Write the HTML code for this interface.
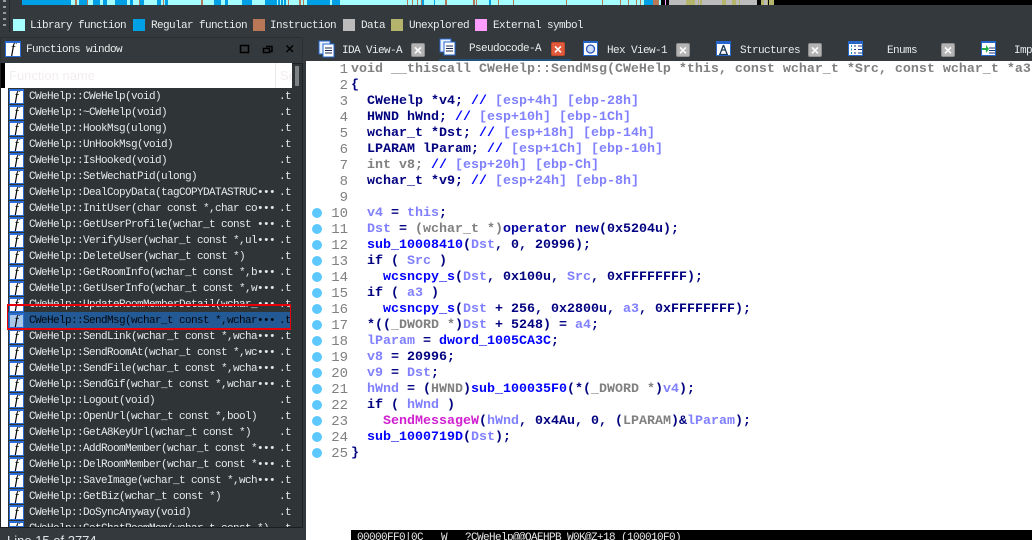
<!DOCTYPE html>
<html style="overflow:hidden;width:1032px;height:540px"><head><meta charset="utf-8"><style>
html,body{margin:0;padding:0}
body{width:1032px;height:540px;overflow:hidden;background:#33393c;font-family:"Liberation Mono",monospace}
#w{position:relative;width:1032px;height:540px;overflow:hidden;background:#33393c}
div,svg{box-sizing:border-box}
.abs{position:absolute}
.lg{position:absolute;top:19px;width:12px;height:12px}
.lt{position:absolute;top:18px;height:16px;line-height:16px;font-size:11px;letter-spacing:-.6px;color:#e8ecec;white-space:pre}
.tab{position:absolute;top:43px;height:16px;line-height:16px;font-size:11px;letter-spacing:-.6px;color:#e8ecec;white-space:pre}
.x{position:absolute;top:43px;width:14px;height:14px;background:#b4b4b4;border:1px solid #8e8e8e;border-radius:2px;color:#fff;font:bold 14px/12px "Liberation Sans",sans-serif;text-align:center}
.r{position:absolute;left:29px;width:246px;height:17px;padding-top:1px;line-height:16px;font-size:11px;letter-spacing:-.6px;color:#e6e9e9;white-space:pre;overflow:hidden}
.s{position:absolute;left:279px;width:13px;height:17px;padding-top:1px;line-height:16px;font-size:11px;letter-spacing:-.6px;color:#e6e9e9;white-space:pre}
.f{position:absolute;left:9px;width:15px;height:15px;background:#fff;border:1px solid #2a6cd6;border-top:2px solid #2a6cd6;color:#000;font:italic 15px/12px "Liberation Serif",serif;text-align:center;overflow:hidden}
.n{position:absolute;left:306px;width:42px;height:18px;line-height:18px;text-align:right;font-size:14px;color:#808080}
.c{position:absolute;left:351px;height:18px;line-height:18px;font-size:13.33px;font-weight:bold;color:#000080;white-space:pre}
.d{position:absolute;left:312px;width:10px;height:10px;border-radius:5px;background:#5cc8ff}
.g{color:#808080}.p{color:#8080ff}.b{color:#0000ff}.m{color:#d01fd0}
</style></head><body><div id="w">
<svg class="abs" style="left:0;top:0" width="1032" height="6">
<rect x="22" y="0" width="622" height="5" fill="#a6ffff"/>
<g fill="#00a0e6"><rect x="22" y="0" width="49" height="5"/><rect x="79" y="0" width="8" height="5"/><rect x="93" y="0" width="7" height="5"/><rect x="103" y="0" width="4" height="5"/><rect x="115" y="0" width="12" height="5"/><rect x="130" y="0" width="3" height="5"/><rect x="140" y="0" width="4" height="5"/><rect x="157" y="0" width="4" height="5"/><rect x="165" y="0" width="3" height="5"/><rect x="214" y="0" width="7" height="5"/><rect x="225" y="0" width="3" height="5"/><rect x="242" y="0" width="10" height="5"/><rect x="265" y="0" width="12" height="5"/><rect x="278" y="0" width="2" height="5"/><rect x="281" y="0" width="2" height="5"/><rect x="284" y="0" width="2" height="5"/><rect x="307" y="0" width="23" height="5"/><rect x="332" y="0" width="8" height="5"/><rect x="422" y="0" width="2" height="5"/><rect x="434" y="0" width="1" height="5"/><rect x="489" y="0" width="2" height="5"/><rect x="644" y="0" width="9" height="5"/></g>
<g fill="#b87858"><rect x="75" y="0" width="2" height="5"/><rect x="87" y="0" width="1" height="5"/><rect x="139" y="0" width="1" height="5"/><rect x="163" y="0" width="1" height="5"/><rect x="201" y="0" width="2" height="5"/><rect x="288" y="0" width="1" height="5"/><rect x="299" y="0" width="2" height="5"/><rect x="303" y="0" width="1" height="5"/><rect x="407" y="0" width="1" height="5"/><rect x="412" y="0" width="1" height="5"/><rect x="417" y="0" width="1" height="5"/><rect x="421" y="0" width="1" height="5"/><rect x="445" y="0" width="2" height="5"/><rect x="473" y="0" width="2" height="5"/><rect x="476" y="0" width="1" height="5"/><rect x="498" y="0" width="1" height="5"/><rect x="513" y="0" width="1" height="5"/><rect x="566" y="0" width="1" height="5"/><rect x="602" y="0" width="1" height="5"/><rect x="620" y="0" width="1" height="5"/><rect x="628" y="0" width="1" height="5"/><rect x="636" y="0" width="1" height="5"/><rect x="640" y="0" width="1" height="5"/><rect x="653" y="0" width="6" height="5"/></g>
<rect x="659" y="0" width="2" height="5" fill="#a6ffff"/>
<rect x="661" y="0" width="371" height="5" fill="#000"/>
<rect x="665" y="0" width="1" height="5" fill="#ff9cff"/>
<rect x="669" y="0" width="88" height="5" fill="#bcbcbc"/>
<g fill="#b4b46c"><rect x="686" y="0" width="9" height="5"/><rect x="698" y="0" width="1" height="5"/><rect x="700" y="0" width="2" height="5"/><rect x="722" y="0" width="4" height="5"/><rect x="732" y="0" width="4" height="5"/><rect x="739" y="0" width="1" height="5"/><rect x="761" y="0" width="3" height="5"/><rect x="767" y="0" width="1" height="5"/><rect x="769" y="0" width="5" height="5"/></g>
<rect x="764" y="0" width="3" height="5" fill="#bcbcbc"/>
</svg>
<div class="abs" style="left:3px;top:0;width:3px;height:28px;background:repeating-linear-gradient(#9a9a9a 0 2px,transparent 2px 6px)"></div>
<div class="abs" style="left:9px;top:0;width:1px;height:32px;background:#23282a"></div>

<div class="lg" style="left:13px;background:#a6ffff"></div><div class="lt" style="left:30px">Library function</div>
<div class="lg" style="left:133px;background:#00a0e6"></div><div class="lt" style="left:151px">Regular function</div>
<div class="lg" style="left:253px;background:#b87858"></div><div class="lt" style="left:270px">Instruction</div>
<div class="lg" style="left:343px;background:#bcbcbc"></div><div class="lt" style="left:361px">Data</div>
<div class="lg" style="left:391px;background:#b4b46c"></div><div class="lt" style="left:409px">Unexplored</div>
<div class="lg" style="left:475px;background:#ff9cff"></div><div class="lt" style="left:493px">External symbol</div>

<div class="abs" style="left:0;top:37px;width:303px;height:24px;border:1px solid #2a2f31;border-bottom:0"></div>
<div class="f" style="left:5px;top:41px;width:16px;height:16px">f</div>
<div class="tab" style="left:26px;top:42px">Functions window</div>
<svg class="abs" style="left:238px;top:42px" width="60" height="14" fill="none" stroke="#000">
<rect x="2.500" y="3.500" width="8" height="7" stroke-width="1.500"/>
<path d="M28 4.500h6v5h-2M25.500 6.500h6v4h-6z" stroke-width="1.500"/>
<path d="M48.500 3.500l6.500 6.500M55 3.500l-6.500 6.500" stroke-width="1.500"/>
</svg>

<div class="abs" style="left:0;top:63px;width:303px;height:465px;background:#2f3437;border:1px solid #1f2224"></div>
<div class="abs" style="left:1px;top:63px;width:4px;height:25px;background:#000"></div>
<div class="abs" style="left:5px;top:63px;width:287px;height:25px;background:#fff"></div>
<div class="abs" style="left:9px;top:69px;font:13px/14px 'Liberation Sans',sans-serif;color:#f2eeee">Function name</div>
<div class="abs" style="left:275px;top:63px;width:1px;height:25px;background:#e8e8e8"></div>
<div class="abs" style="left:280px;top:69px;font:13px/14px 'Liberation Sans',sans-serif;color:#f2eeee;width:12px;overflow:hidden">Se</div>
<div class="abs" style="left:295px;top:66px;width:4px;height:20px;background:#7e8284"></div>
<div class="abs" style="left:1px;top:88px;width:7px;height:439px;background:#fff"></div>

<div class="abs" style="left:8px;top:312px;width:282px;height:17px;background:#235a96"></div>

<div class="f" style="top:89px">f</div><div class="r" style="top:88px">CWeHelp::CWeHelp(void)</div><div class="s" style="top:88px">.t</div>
<div class="f" style="top:105px">f</div><div class="r" style="top:104px">CWeHelp::~CWeHelp(void)</div><div class="s" style="top:104px">.t</div>
<div class="f" style="top:121px">f</div><div class="r" style="top:120px">CWeHelp::HookMsg(ulong)</div><div class="s" style="top:120px">.t</div>
<div class="f" style="top:137px">f</div><div class="r" style="top:136px">CWeHelp::UnHookMsg(void)</div><div class="s" style="top:136px">.t</div>
<div class="f" style="top:153px">f</div><div class="r" style="top:152px">CWeHelp::IsHooked(void)</div><div class="s" style="top:152px">.t</div>
<div class="f" style="top:169px">f</div><div class="r" style="top:168px">CWeHelp::SetWechatPid(ulong)</div><div class="s" style="top:168px">.t</div>
<div class="f" style="top:185px">f</div><div class="r" style="top:184px">CWeHelp::DealCopyData(tagCOPYDATASTRUC•••</div><div class="s" style="top:184px">.t</div>
<div class="f" style="top:201px">f</div><div class="r" style="top:200px">CWeHelp::InitUser(char const *,char co•••</div><div class="s" style="top:200px">.t</div>
<div class="f" style="top:217px">f</div><div class="r" style="top:216px">CWeHelp::GetUserProfile(wchar_t const •••</div><div class="s" style="top:216px">.t</div>
<div class="f" style="top:233px">f</div><div class="r" style="top:232px">CWeHelp::VerifyUser(wchar_t const *,ul•••</div><div class="s" style="top:232px">.t</div>
<div class="f" style="top:249px">f</div><div class="r" style="top:248px">CWeHelp::DeleteUser(wchar_t const *)</div><div class="s" style="top:248px">.t</div>
<div class="f" style="top:265px">f</div><div class="r" style="top:264px">CWeHelp::GetRoomInfo(wchar_t const *,b•••</div><div class="s" style="top:264px">.t</div>
<div class="f" style="top:281px">f</div><div class="r" style="top:280px">CWeHelp::GetUserInfo(wchar_t const *,w•••</div><div class="s" style="top:280px">.t</div>
<div class="f" style="top:297px">f</div><div class="r" style="top:296px">CWeHelp::UpdateRoomMemberDetail(wchar_•••</div><div class="s" style="top:296px">.t</div>
<div class="f" style="top:313px;background:#a9c8e8">f</div><div class="r" style="top:312px;color:#05080c">CWeHelp::SendMsg(wchar_t const *,wchar•••</div><div class="s" style="top:312px;color:#05080c">.t</div>
<div class="f" style="top:329px">f</div><div class="r" style="top:328px">CWeHelp::SendLink(wchar_t const *,wcha•••</div><div class="s" style="top:328px">.t</div>
<div class="f" style="top:345px">f</div><div class="r" style="top:344px">CWeHelp::SendRoomAt(wchar_t const *,wc•••</div><div class="s" style="top:344px">.t</div>
<div class="f" style="top:361px">f</div><div class="r" style="top:360px">CWeHelp::SendFile(wchar_t const *,wcha•••</div><div class="s" style="top:360px">.t</div>
<div class="f" style="top:377px">f</div><div class="r" style="top:376px">CWeHelp::SendGif(wchar_t const *,wchar•••</div><div class="s" style="top:376px">.t</div>
<div class="f" style="top:393px">f</div><div class="r" style="top:392px">CWeHelp::Logout(void)</div><div class="s" style="top:392px">.t</div>
<div class="f" style="top:409px">f</div><div class="r" style="top:408px">CWeHelp::OpenUrl(wchar_t const *,bool)</div><div class="s" style="top:408px">.t</div>
<div class="f" style="top:425px">f</div><div class="r" style="top:424px">CWeHelp::GetA8KeyUrl(wchar_t const *)</div><div class="s" style="top:424px">.t</div>
<div class="f" style="top:441px">f</div><div class="r" style="top:440px">CWeHelp::AddRoomMember(wchar_t const *•••</div><div class="s" style="top:440px">.t</div>
<div class="f" style="top:457px">f</div><div class="r" style="top:456px">CWeHelp::DelRoomMember(wchar_t const *•••</div><div class="s" style="top:456px">.t</div>
<div class="f" style="top:473px">f</div><div class="r" style="top:472px">CWeHelp::SaveImage(wchar_t const *,wch•••</div><div class="s" style="top:472px">.t</div>
<div class="f" style="top:489px">f</div><div class="r" style="top:488px">CWeHelp::GetBiz(wchar_t const *)</div><div class="s" style="top:488px">.t</div>
<div class="f" style="top:505px">f</div><div class="r" style="top:504px">CWeHelp::DoSyncAnyway(void)</div><div class="s" style="top:504px">.t</div>
<div class="f" style="top:521px;height:6px">f</div><div class="r" style="top:520px;height:7px">CWeHelp::GetChatRoomMem(wchar_t const *)</div><div class="s" style="top:520px;height:7px;overflow:hidden">.t</div>

<div class="abs" style="left:7px;top:304px;width:284px;height:26px;border:solid #e8000a;border-width:2px 1px"></div>
<div class="abs" style="left:0;top:527px;width:303px;height:1px;background:#1c1f21"></div>
<div class="abs" style="left:7px;top:534px;font:13px/14px 'Liberation Sans',sans-serif;color:#dfe6ea">Line 15 of 2774</div>

<svg class="abs" style="left:318px;top:40px" width="20" height="18"><rect x="1" y="1" width="11" height="13" fill="#e6effc" stroke="#2466cc"/><rect x="5" y="4" width="11" height="13" fill="#fff" stroke="#2466cc"/><path d="M7 8h7M7 10.500h7M7 13h7" stroke="#1b2a55"/></svg>
<div class="tab" style="left:342px">IDA View-A</div>
<div class="x" style="left:411px">×</div>
<svg class="abs" style="left:439px;top:38px" width="20" height="18"><rect x="1" y="1" width="11" height="13" fill="#e6effc" stroke="#2466cc"/><rect x="5" y="4" width="11" height="13" fill="#fff" stroke="#2466cc"/><path d="M7 8h7M7 10.500h7M7 13h7" stroke="#1b2a55"/></svg>
<div class="tab" style="left:469px;top:41px">Pseudocode-A</div>
<div class="x" style="left:551px;top:42px;background:#e25a3c;border-color:#c44a2c">×</div>
<div class="abs" style="left:439px;top:59px;width:132px;height:2px;background:#23527f"></div>
<svg class="abs" style="left:583px;top:41px" width="16" height="16"><rect x="0.500" y="0.500" width="14" height="14" fill="#fff" stroke="#2466cc"/><rect x="0" y="0" width="15" height="2" fill="#2466cc"/><circle cx="7.500" cy="8" r="4" fill="#cfe0fa" stroke="#2a54c4" stroke-width="1.300"/></svg>
<div class="tab" style="left:607px">Hex View-1</div>
<div class="x" style="left:676px">×</div>
<svg class="abs" style="left:716px;top:41px" width="16" height="16"><rect x="0.500" y="0.500" width="14" height="14" fill="#fff" stroke="#2466cc"/><rect x="0" y="0" width="15" height="3" fill="#2466cc"/><path d="M7.500 4L4 13M7.500 4l3.500 9M5 9h5M3 13.500h9" stroke="#1c3a5c" fill="none" stroke-width="1.300"/></svg>
<div class="tab" style="left:740px">Structures</div>
<div class="x" style="left:808px">×</div>
<svg class="abs" style="left:848px;top:41px" width="16" height="16"><rect x="0.500" y="0.500" width="14" height="14" fill="#fff" stroke="#2466cc"/><rect x="0" y="0" width="15" height="3" fill="#2466cc"/><path d="M6 5h2M6 8.500h2M6 12h2M10 5h4M10 8.500h4M10 12h4" stroke="#1b3a80"/><path d="M3 5h1M3 8.500h1M3 12h1" stroke="#1b9ad0" stroke-width="2"/></svg>
<div class="tab" style="left:887px">Enums</div>
<div class="x" style="left:941px">×</div>
<svg class="abs" style="left:981px;top:41px" width="16" height="16"><rect x="0.500" y="0.500" width="14" height="14" fill="#fff" stroke="#2466cc"/><rect x="0" y="0" width="15" height="2" fill="#2466cc"/><path d="M8 7h6M8 9.500h6M8 12h6" stroke="#1b3a80"/><path d="M1 7h4V4l3 4-3 4V9H1z" fill="#1fb04a"/></svg>
<div class="tab" style="left:1014px;width:18px;overflow:hidden">Imp</div>

<div class="abs" style="left:306px;top:61px;width:726px;height:479px;background:#fff"></div>
<div class="abs" style="left:351px;top:530px;width:681px;height:10px;background:#000;color:#e8e8e8;font-size:11px;letter-spacing:-.6px;line-height:17px;white-space:pre;overflow:hidden"> 00000FF0|0C   W   ?CWeHelp@@QAEHPB_W0K@Z+18 (100010F0)</div>

<div class="n" style="top:61px">1</div><div class="c g" style="top:61px">void __thiscall CWeHelp::SendMsg(CWeHelp *this, const wchar_t *Src, const wchar_t *a3</div>
<div class="n" style="top:77px">2</div><div class="c" style="top:77px">{</div>
<div class="n" style="top:93px">3</div><div class="c" style="top:93px">  CWeHelp *v4; <span class="b">//</span> <span class="p">[esp+4h] [ebp-28h]</span></div>
<div class="n" style="top:109px">4</div><div class="c" style="top:109px">  HWND hWnd; <span class="b">//</span> <span class="p">[esp+10h] [ebp-1Ch]</span></div>
<div class="n" style="top:125px">5</div><div class="c" style="top:125px">  wchar_t *Dst; <span class="b">//</span> <span class="p">[esp+18h] [ebp-14h]</span></div>
<div class="n" style="top:141px">6</div><div class="c" style="top:141px">  LPARAM lParam; <span class="b">//</span> <span class="p">[esp+1Ch] [ebp-10h]</span></div>
<div class="n" style="top:157px">7</div><div class="c" style="top:157px"><span class="g">  int v8;</span> <span class="b">//</span> <span class="p">[esp+20h] [ebp-Ch]</span></div>
<div class="n" style="top:173px">8</div><div class="c" style="top:173px">  wchar_t *v9; <span class="b">//</span> <span class="p">[esp+24h] [ebp-8h]</span></div>
<div class="n" style="top:189px">9</div>
<div class="d" style="top:208px"></div><div class="n" style="top:205px">10</div><div class="c" style="top:205px">  <span class="p">v4</span> = <span class="p">this</span>;</div>
<div class="d" style="top:224px"></div><div class="n" style="top:221px">11</div><div class="c" style="top:221px">  <span class="p">Dst</span> = <span class="g">(wchar_t *)</span><span style="color:#0000a0">operator new</span>(0x5204u);</div>
<div class="d" style="top:240px"></div><div class="n" style="top:237px">12</div><div class="c" style="top:237px">  <span class="b">sub_10008410</span>(<span class="p">Dst</span>, 0, 20996);</div>
<div class="d" style="top:256px"></div><div class="n" style="top:253px">13</div><div class="c" style="top:253px">  if ( <span class="p">Src</span> )</div>
<div class="d" style="top:272px"></div><div class="n" style="top:269px">14</div><div class="c" style="top:269px">    <span class="b">wcsncpy_s</span>(<span class="p">Dst</span>, 0x100u, <span class="p">Src</span>, 0xFFFFFFFF);</div>
<div class="d" style="top:288px"></div><div class="n" style="top:285px">15</div><div class="c" style="top:285px">  if ( <span class="p">a3</span> )</div>
<div class="d" style="top:304px"></div><div class="n" style="top:301px">16</div><div class="c" style="top:301px">    <span class="b">wcsncpy_s</span>(<span class="p">Dst</span> + 256, 0x2800u, <span class="p">a3</span>, 0xFFFFFFFF);</div>
<div class="d" style="top:320px"></div><div class="n" style="top:317px">17</div><div class="c" style="top:317px">  *((<span class="g">_DWORD *</span>)<span class="p">Dst</span> + 5248) = <span class="p">a4</span>;</div>
<div class="d" style="top:336px"></div><div class="n" style="top:333px">18</div><div class="c" style="top:333px">  <span class="p">lParam</span> = <span class="b">dword_1005CA3C</span>;</div>
<div class="d" style="top:352px"></div><div class="n" style="top:349px">19</div><div class="c" style="top:349px">  <span class="p">v8</span> = 20996;</div>
<div class="d" style="top:368px"></div><div class="n" style="top:365px">20</div><div class="c" style="top:365px">  <span class="p">v9</span> = <span class="p">Dst</span>;</div>
<div class="d" style="top:384px"></div><div class="n" style="top:381px">21</div><div class="c" style="top:381px">  <span class="p">hWnd</span> = (<span class="g">HWND</span>)<span class="b">sub_100035F0</span>(*(<span class="g">_DWORD *</span>)<span class="p">v4</span>);</div>
<div class="d" style="top:400px"></div><div class="n" style="top:397px">22</div><div class="c" style="top:397px">  if ( <span class="p">hWnd</span> )</div>
<div class="d" style="top:416px"></div><div class="n" style="top:413px">23</div><div class="c" style="top:413px">    <span class="m">SendMessageW</span>(<span class="p">hWnd</span>, 0x4Au, 0, (<span class="g">LPARAM</span>)&amp;<span class="p">lParam</span>);</div>
<div class="d" style="top:432px"></div><div class="n" style="top:429px">24</div><div class="c" style="top:429px">  <span class="b">sub_1000719D</span>(<span class="p">Dst</span>);</div>
<div class="d" style="top:448px"></div><div class="n" style="top:445px">25</div><div class="c" style="top:445px">}</div>
</div></body></html>
